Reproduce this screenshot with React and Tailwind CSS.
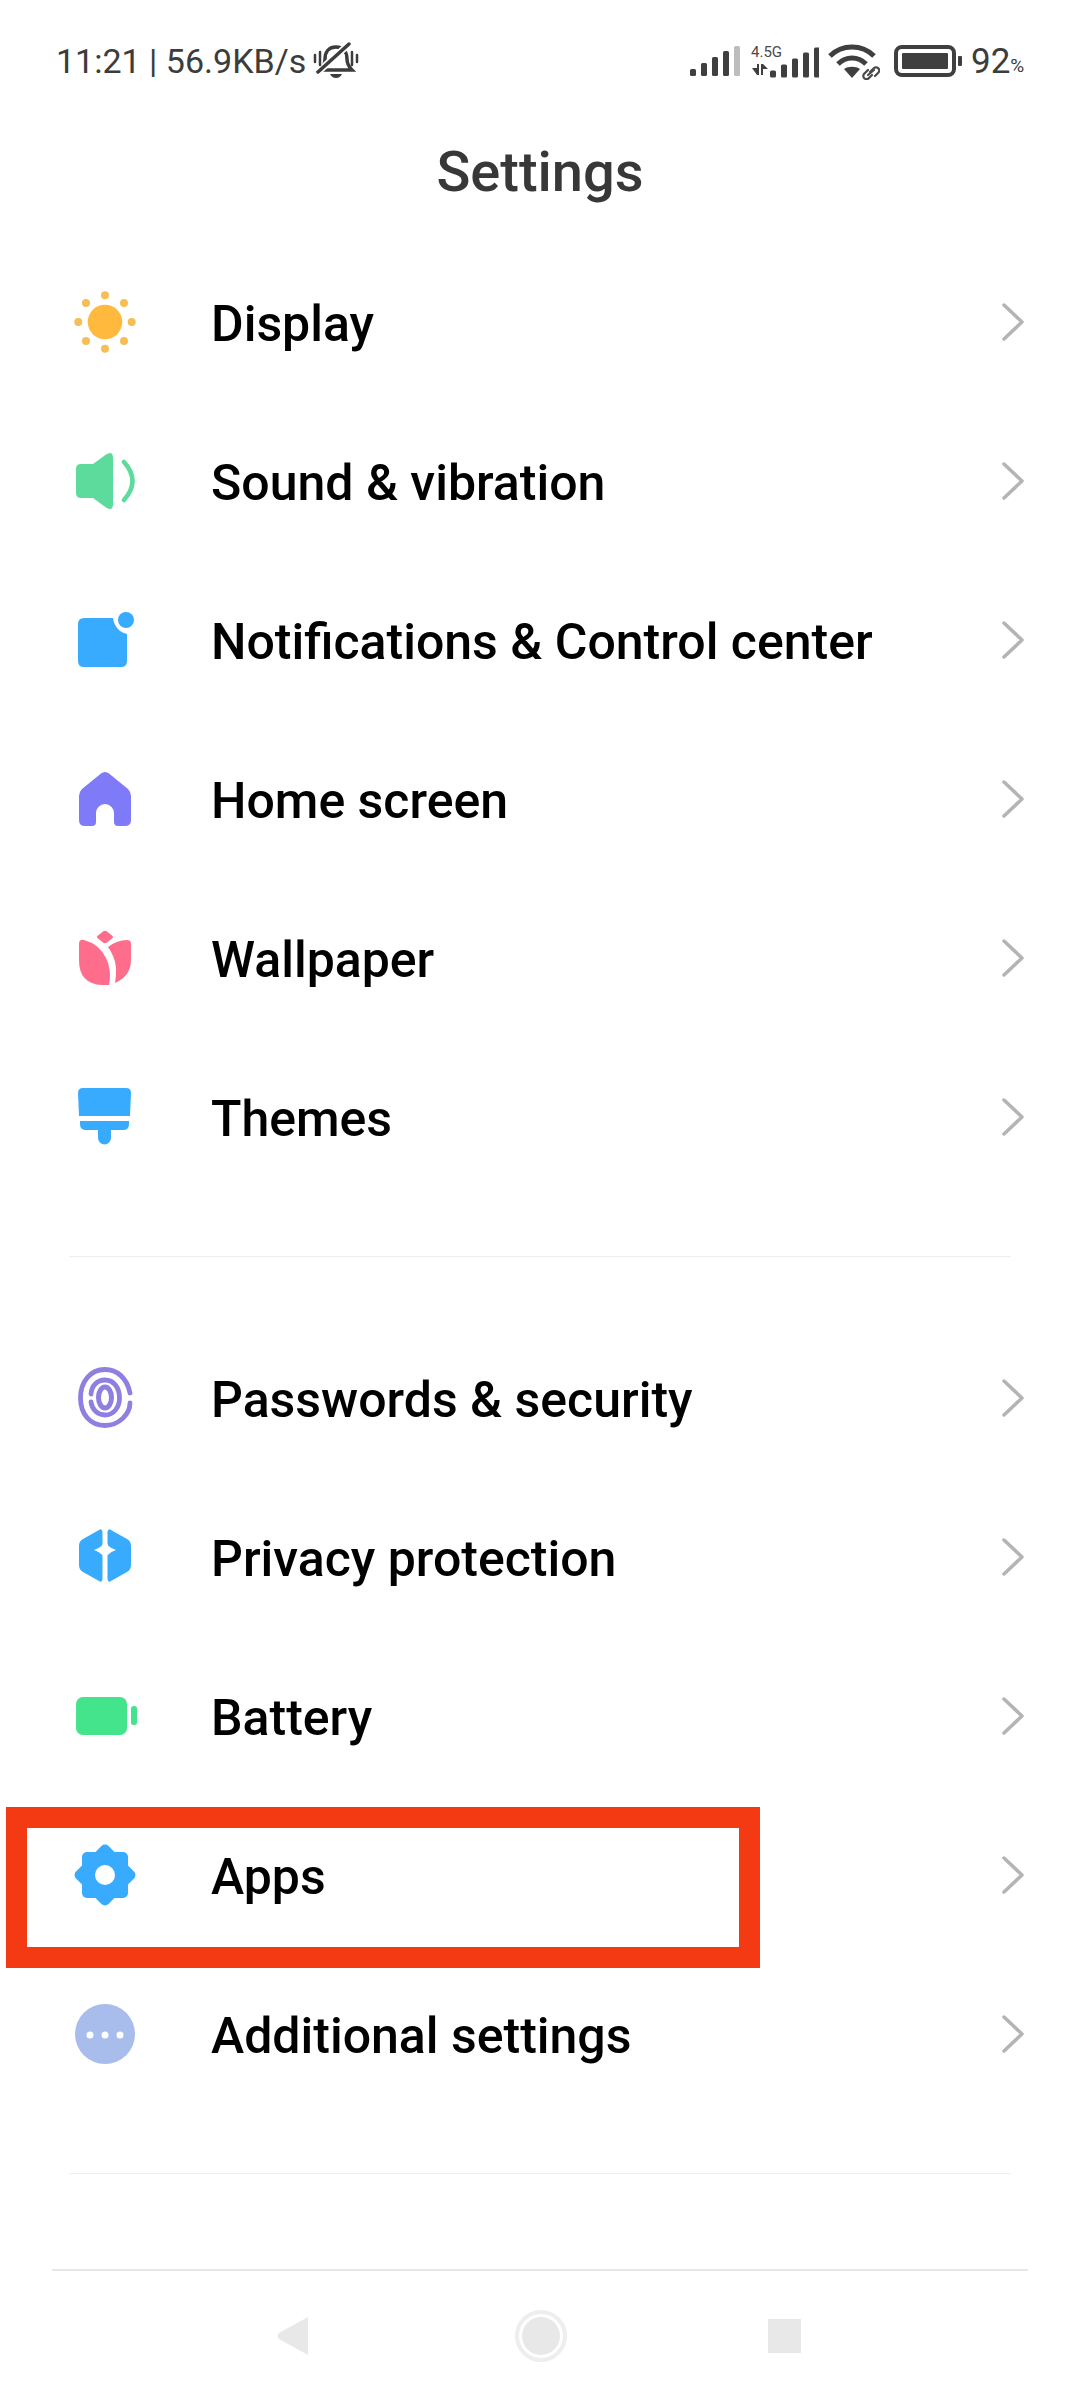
const blue = '#38ABFF';

const icons = {
  display: (
    <>
      <circle cx="32" cy="32" r="17.3" fill="#FFB93C" />
      {[[32, 5.3], [51, 13], [58.7, 32], [51, 51], [32, 58.7], [13, 51], [5.3, 32], [13, 13]].map(([x, y], i) => (
        <circle key={i} cx={x} cy={y} r="4" fill="#F6BE55" />
      ))}
    </>
  ),
  sound: (
    <>
      <path d="M8 15H20L33 5.5Q40 1 40 9V55Q40 63 33 58.5L20 49H8Q3 49 3 44V20Q3 15 8 15Z" fill="#5DDB9D" />
      <path d="M51 13Q68 32 51 51" fill="none" stroke="#5DDB9D" strokeWidth="4.5" strokeLinecap="round" />
    </>
  ),
  notifications: (
    <>
      <path d="M11 10H40Q41 18 47 23Q50 25 54 26V53Q54 59 48 59H11Q5 59 5 53V16Q5 10 11 10Z" fill={blue} />
      <circle cx="53" cy="12" r="8" fill={blue} />
    </>
  ),
  home: (
    <path fillRule="evenodd" d="M28 6.5Q32 3.5 36 6.5L55 22Q58 25 58 29V53Q58 59 52 59H45Q41 59 41 55V46A9 9 0 0 0 23 46V55Q23 59 19 59H12Q6 59 6 53V29Q6 25 9 22Z" fill="#7F7AF7" />
  ),
  wallpaper: (
    <>
      <path d="M30 5.5Q32 4 34 5.5L39 9.500Q41 11 39 12.500L34 16.500Q32 18 30 16.500L25 12.500Q23 11 25 9.500Z" fill="#FF6D8D" />
      <path d="M6 18Q6 13 11 14Q26 18 33 32Q39 44 36 59H29Q6 58 6 34Z" fill="#FF6D8D" />
      <path d="M35 21Q44 14 54 14Q58 14 58 18V34Q58 50 42 57Q45 40 40 30Q38 25 35 21Z" fill="#FF6D8D" />
    </>
  ),
  themes: (
    <>
      <path d="M10 3H53Q58 3 58 8L57 31H6L5 8Q5 3 10 3Z" fill={blue} />
      <path d="M7 36H56V39Q56 45 50 45H38V53A6.5 6.5 0 0 1 25 53V45H13Q7 45 7 39Z" fill={blue} />
    </>
  ),
  passwords: (
    <g fill="none" stroke="#8E7FE0" strokeLinecap="round">
      <path d="M57 27C54 12 44 3.5 32 3.5C17 3.5 7.5 16 7.5 32C7.5 48 17 59.5 32 59.5C46 59.5 57 48 57 37" strokeWidth="4.8" />
      <path d="M18 36C19 44 25 49 32 49C41 49 46.5 41 46.5 32C46.5 22 41 14 32 14C24 14 18.5 20 18 28" strokeWidth="4.8" />
      <ellipse cx="32" cy="31.5" rx="6.5" ry="10.5" strokeWidth="5" />
    </g>
  ),
  privacy: (
    <>
      <path d="M26 5Q29 3 29.5 7V54Q29 58 26 56L10 47Q6 45 6 40V21Q6 16 10 14Z" fill={blue} />
      <path d="M38 5Q35 3 34.5 7V54Q35 58 38 56L54 47Q58 45 58 40V21Q58 16 54 14Z" fill={blue} />
      <path d="M32 13Q33 22 43 25Q33 28 32 37Q31 28 21 25Q31 22 32 13Z" fill="#ffffff" />
    </>
  ),
  battery: (
    <>
      <rect x="3" y="13" width="51" height="38" rx="7" fill="#44E48C" />
      <rect x="58" y="22" width="6" height="19" rx="2.5" fill="#44E48C" />
    </>
  ),
  apps: (
    <>
      <rect x="9" y="9" width="46" height="46" rx="5" fill={blue} />
      <rect x="9" y="9" width="46" height="46" rx="5" fill={blue} transform="rotate(45 32 32)" />
      <circle cx="32" cy="32" r="10" fill="#ffffff" />
    </>
  ),
  additional: (
    <>
      <circle cx="32" cy="32" r="30" fill="#A8BDEB" />
      <circle cx="17" cy="33" r="3.5" fill="#ffffff" />
      <circle cx="32" cy="33" r="3.5" fill="#ffffff" />
      <circle cx="47" cy="33" r="3.5" fill="#ffffff" />
    </>
  ),
};

const groupOne = [
  { icon: 'display', label: 'Display' },
  { icon: 'sound', label: 'Sound & vibration' },
  { icon: 'notifications', label: 'Notifications & Control center' },
  { icon: 'home', label: 'Home screen' },
  { icon: 'wallpaper', label: 'Wallpaper' },
  { icon: 'themes', label: 'Themes' },
];

const groupTwo = [
  { icon: 'passwords', label: 'Passwords & security' },
  { icon: 'privacy', label: 'Privacy protection' },
  { icon: 'battery', label: 'Battery' },
  { icon: 'apps', label: 'Apps' },
  { icon: 'additional', label: 'Additional settings' },
];

function Bars({ last = '#3f3f3f' }) {
  const bars = [[0, 7], [11, 13], [22, 19], [33, 25], [44, 30]];
  return bars.map(([x, h], i) => (
    <rect key={i} x={x} y={30 - h} width="6" height={h} rx="1.5" fill={i === 4 ? last : '#3f3f3f'} />
  ));
}

function StatusBar() {
  return (
    <div className="h-[50px] mt-[36px] flex items-center text-[#3c3c3c]">
      <span className="ml-[56px] w-[252px] whitespace-nowrap text-[34px] leading-none">11:21 | 56.9KB/s</span>
      <svg width="46" height="40" viewBox="0 0 46 40" className="ml-[5px] mt-[-1px]">
        <path d="M23 6C15 6 12 12 12 18C12 23 10 26 7 29H39C36 26 34 23 34 18C34 12 31 6 23 6Z" fill="none" stroke="#3c3c3c" strokeWidth="3.5" />
        <path d="M17 33H29Q27 37 23 37Q19 37 17 33Z" fill="#3c3c3c" />
        <path d="M5 31L36 3" stroke="#ffffff" strokeWidth="7" />
        <path d="M5 31L36 3" stroke="#3c3c3c" strokeWidth="3.5" strokeLinecap="round" />
        <path d="M2 14V21M7 11V24M39 11V24M44 14V21" stroke="#3c3c3c" strokeWidth="2.5" strokeLinecap="round" />
      </svg>
      <svg width="50" height="30" viewBox="0 0 50 30" className="ml-[331px]">
        <Bars last="#bdbdbd" />
      </svg>
      <div className="relative w-[68px] h-[34px] ml-[11px] mt-[-1px]">
        <span className="absolute left-0 top-0 text-[15px] leading-[16px] text-[#4a4a4a]">4.5G</span>
        <svg width="68" height="34" viewBox="0 0 68 34">
          <path d="M1 24H6V31ZM8 20V31H6V20ZM10 20V31L12 31V20ZM12 20L17 25H12Z" fill="#3f3f3f" />
          <g transform="translate(19 3.5)">
            <Bars />
          </g>
        </svg>
      </div>
      <svg width="52" height="38" viewBox="0 0 52 38" className="ml-[9px]">
        <g fill="none" stroke="#3f3f3f" strokeWidth="5">
          <path d="M2 14C14 2 34 2 46 14" />
          <path d="M10 22C18 14 30 14 38 22" />
        </g>
        <path d="M24 36L16 27C20 24 28 24 32 27Z" fill="#3f3f3f" />
        <g fill="none" stroke="#4a4a4a" strokeWidth="2.2" strokeLinecap="round">
          <path d="M40 28L36 32A3 3 0 0 0 41 36L44 33" />
          <path d="M42 30L46 26A3 3 0 0 1 50 31L47 34" />
          <path d="M40 33L46 28" />
        </g>
      </svg>
      <svg width="68" height="32" viewBox="0 0 68 32" className="ml-[14px]">
        <rect x="2" y="2" width="58" height="28" rx="6" fill="none" stroke="#3f3f3f" strokeWidth="4" />
        <rect x="8" y="8" width="46" height="16" rx="1" fill="#3f3f3f" />
        <rect x="64" y="11" width="4" height="10" rx="1" fill="#3f3f3f" />
      </svg>
      <span className="ml-[9px] text-[35px] leading-none">92</span>
      <span className="text-[19px] leading-none mt-[8px]">%</span>
    </div>
  );
}

function Row({ icon, label }) {
  return (
    <div className="h-[159px] flex items-center pl-[73px]">
      <svg width="64" height="64" viewBox="0 0 64 64" className="shrink-0">
        {icons[icon]}
      </svg>
      <span className="ml-[74px] flex-1 pt-[5px] text-[50px] leading-none font-medium text-black whitespace-nowrap">{label}</span>
      <svg width="24" height="40" viewBox="0 0 24 40" className="mr-[55px] shrink-0">
        <path d="M3 3L21 20L3 37" fill="none" stroke="#b4b4b4" strokeWidth="3.5" strokeLinecap="round" strokeLinejoin="round" />
      </svg>
    </div>
  );
}

function NavBar() {
  return (
    <div className="h-[130px] mx-[52px] border-t-2 border-[#e6e6e6]">
      <div className="h-[130px] flex items-center pl-[224px]">
        <svg width="32" height="38" viewBox="0 0 32 38">
          <path d="M32 0V38L3 22Q0 19 3 16Z" fill="#e8e8e8" />
        </svg>
        <svg width="52" height="52" viewBox="0 0 52 52" className="ml-[207px]">
          <circle cx="26" cy="26" r="24" fill="none" stroke="#eeeeee" strokeWidth="4" />
          <circle cx="26" cy="26" r="19" fill="#e8e8e8" />
        </svg>
        <div className="ml-[201px] w-[33px] h-[34px] bg-[#e8e8e8]" />
      </div>
    </div>
  );
}

export default function App() {
  return (
    <div className="relative w-[1080px] h-[2400px] overflow-hidden bg-white font-['Roboto',sans-serif]">
      <StatusBar />
      <h1 className="mt-[36px] h-[100px] flex items-center justify-center text-[56px] font-medium text-[#383838]">Settings</h1>

      <div className="mt-[20px]">
        {groupOne.map((item) => <Row key={item.label} {...item} />)}
      </div>
      <div className="mt-[60px] mx-[69px] h-px bg-[#eeeeee]" />

      <div className="mt-[61px]">
        {groupTwo.map((item) => <Row key={item.label} {...item} />)}
      </div>
      <div className="mt-[60px] mx-[69px] h-px bg-[#eeeeee]" />

      <div className="mt-[95px]">
        <NavBar />
      </div>

      {/* red annotation drawn over the screenshot */}
      <div className="absolute left-[6px] top-[1807px] w-[754px] h-[161px] border-[21px] border-[#F43A12]" />
    </div>
  );
}
